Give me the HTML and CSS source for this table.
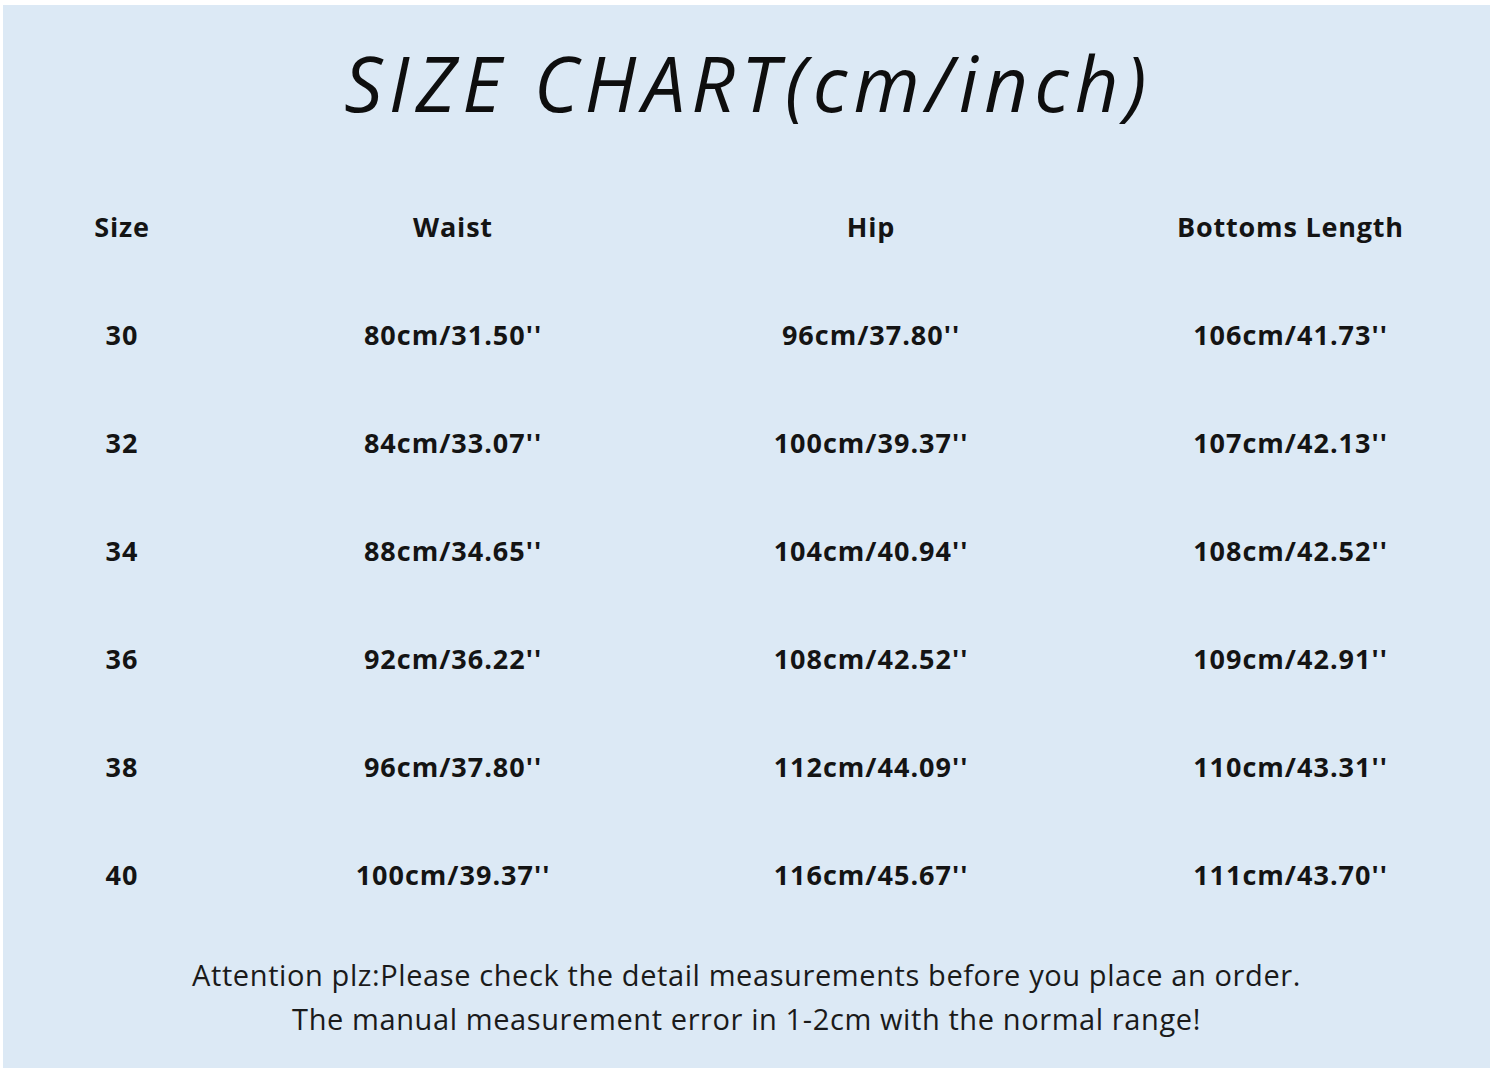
FILE: index.html
```html
<!DOCTYPE html>
<html lang="en">
<head>
<meta charset="utf-8">
<title>Size Chart</title>
<link rel="stylesheet" href="styles.css">
</head>
<body>
<div class="panel">
  <h1 class="title">SIZE CHART(cm/inch)</h1>
  <div class="chart">
    <div class="row head">
      <div class="cell">Size</div><div class="cell">Waist</div><div class="cell">Hip</div><div class="cell c4">Bottoms Length</div>
    </div>
    <div class="row">
      <div class="cell">30</div><div class="cell">80cm/31.50''</div><div class="cell">96cm/37.80''</div><div class="cell c4">106cm/41.73''</div>
    </div>
    <div class="row">
      <div class="cell">32</div><div class="cell">84cm/33.07''</div><div class="cell">100cm/39.37''</div><div class="cell c4">107cm/42.13''</div>
    </div>
    <div class="row">
      <div class="cell">34</div><div class="cell">88cm/34.65''</div><div class="cell">104cm/40.94''</div><div class="cell c4">108cm/42.52''</div>
    </div>
    <div class="row">
      <div class="cell">36</div><div class="cell">92cm/36.22''</div><div class="cell">108cm/42.52''</div><div class="cell c4">109cm/42.91''</div>
    </div>
    <div class="row">
      <div class="cell">38</div><div class="cell">96cm/37.80''</div><div class="cell">112cm/44.09''</div><div class="cell c4">110cm/43.31''</div>
    </div>
    <div class="row">
      <div class="cell">40</div><div class="cell">100cm/39.37''</div><div class="cell">116cm/45.67''</div><div class="cell c4">111cm/43.70''</div>
    </div>
  </div>
  <div class="note">
    <p>Attention plz:Please check the detail measurements before you place an order.</p>
    <p>The manual measurement error in 1-2cm with the normal range!</p>
  </div>
</div>
</body>
</html>
```

FILE: styles.css
```css
html, body {
  margin: 0;
  padding: 0;
  background: #ffffff;
}

body {
  padding: 5px 0 0 3px;
  font-family: "Open Sans", "Noto Sans", sans-serif;
  color: #141414;
}

.panel {
  width: 1487px;
  height: 1063px;
  background: #dce9f5;
  box-sizing: border-box;
}

.title {
  margin: 0;
  height: 167px;
  box-sizing: border-box;
  padding-top: 28px;
  padding-left: 4px;
  text-align: center;
  font-family: "Open Sans", sans-serif;
  font-style: italic;
  font-weight: 400;
  font-size: 76px;
  line-height: 100px;
  letter-spacing: 6.2px;
  color: #0e0e0e;
}

.chart {
  display: flex;
  flex-direction: column;
}

.row {
  display: grid;
  grid-template-columns: 238px 424px 412px 1fr;
  height: 108px;
  align-items: center;
  font-weight: 700;
  font-size: 27px;
  letter-spacing: 1px;
}

.cell {
  text-align: center;
}

.c4 {
  padding-left: 14px;
}

.head {
  font-size: 27px;
  letter-spacing: 0.8px;
}

.note {
  padding-top: 25px;
  text-align: center;
  font-size: 29px;
  line-height: 44px;
  letter-spacing: 0.6px;
  color: #1a1a1a;
}

.note p {
  margin: 0;
}
```
